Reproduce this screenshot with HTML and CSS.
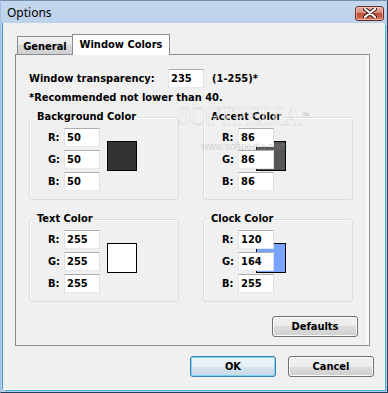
FILE: index.html
```html
<!DOCTYPE html>
<html>
<head>
<meta charset="utf-8">
<title>Options</title>
<link rel="stylesheet" href="styles.css">
</head>
<body>
<div class="window">
  <div class="titlebar">
    <span class="title">Options</span>
    <div class="close">
      <svg width="14" height="10" viewBox="0 0 14 10">
        <path d="M2 1 L12 9 M12 1 L2 9" stroke="#3a1a1a" stroke-width="4" stroke-linecap="round"/>
        <path d="M2 1 L12 9 M12 1 L2 9" stroke="#ffffff" stroke-width="2.2" stroke-linecap="round"/>
      </svg>
    </div>
  </div>
  <div class="client">
    <div class="tabs">
      <div class="tab">General</div>
      <div class="tab active">Window Colors</div>
    </div>
    <div class="panel">
      <div class="trans-row">
        <span class="trans-label">Window transparency:</span>
        <span class="input">235</span>
        <span class="range">(1-255)*</span>
      </div>
      <div class="note">*Recommended not lower than 40.</div>
      <div class="groups">
        <fieldset class="group">
          <legend>Background Color</legend>
          <div class="gbody">
            <div class="rows">
              <span class="lbl">R:</span><span class="input">50</span>
              <span class="lbl">G:</span><span class="input">50</span>
              <span class="lbl">B:</span><span class="input">50</span>
            </div>
            <div class="swatch" style="background:#323232"></div>
          </div>
        </fieldset>
        <fieldset class="group">
          <legend>Accent Color</legend>
          <div class="gbody">
            <div class="rows">
              <span class="lbl">R:</span><span class="input">86</span>
              <span class="lbl">G:</span><span class="input">86</span>
              <span class="lbl">B:</span><span class="input">86</span>
            </div>
            <div class="swatch under" style="background:#565656"></div>
          </div>
        </fieldset>
        <fieldset class="group">
          <legend>Text Color</legend>
          <div class="gbody">
            <div class="rows">
              <span class="lbl">R:</span><span class="input">255</span>
              <span class="lbl">G:</span><span class="input">255</span>
              <span class="lbl">B:</span><span class="input">255</span>
            </div>
            <div class="swatch" style="background:#ffffff"></div>
          </div>
        </fieldset>
        <fieldset class="group">
          <legend>Clock Color</legend>
          <div class="gbody">
            <div class="rows">
              <span class="lbl">R:</span><span class="input">120</span>
              <span class="lbl">G:</span><span class="input">164</span>
              <span class="lbl">B:</span><span class="input">255</span>
            </div>
            <div class="swatch under" style="background:#78a4ff"></div>
          </div>
        </fieldset>
      </div>
      <div class="panel-foot">
        <button class="btn">Defaults</button>
      </div>
    </div>
    <div class="footer">
      <button class="btn ok">OK</button>
      <button class="btn">Cancel</button>
    </div>
  </div>
  <div class="watermark">
    <span class="wm-big">SOFTPEDIA<sup>™</sup></span>
    <span class="wm-small">www.softpedia.com</span>
  </div>
</div>
</body>
</html>
```

FILE: styles.css
```css
* { box-sizing: border-box; }
html, body { margin: 0; padding: 0; }
body {
  width: 388px;
  height: 393px;
  overflow: hidden;
  background: #f0f0f0;
  font-family: "DejaVu Sans Condensed", "DejaVu Sans", sans-serif;
  font-size: 11px;
  font-weight: bold;
  color: #000;
}
.window {
  position: relative;
  width: 388px;
  height: 393px;
  display: flex;
  flex-direction: column;
  background: linear-gradient(#c4d7ed, #b9d0ea 30px, #b9d0ea);
  border-right: 1px solid #1f3d5c;
  border-bottom: 1px solid #1f3d5c;
  border-top: 1px solid #6f8fb3;
  border-left: 1px solid #9fc2e4;
}
.titlebar {
  height: 22px;
  flex: none;
  display: flex;
  align-items: center;
  justify-content: space-between;
  padding: 0 3px 0 6px;
}
.title {
  font-family: "Noto Sans", "Open Sans", sans-serif;
  font-weight: normal;
  font-size: 12px;
  color: #000;
  margin-top: 1px;
}
.close {
  width: 29px;
  height: 15px;
  margin-top: 2px;
  border: 1px solid #6a2f2a;
  border-radius: 3px;
  background: linear-gradient(#e8b0a4, #d48a78 45%, #c0503c 50%, #c75a44 75%, #dc8a6e);
  box-shadow: inset 0 0 0 1px rgba(255,220,210,0.5);
  display: flex;
  align-items: center;
  justify-content: center;
}
.client {
  flex: 1;
  margin: 0 3px 3px 2px;
  background: #f0f0f0;
  box-shadow: 1px 1px 0 #ffffff, -1px 0 0 #3f95d2, 2px 2px 0 #3fa9e0;
  display: flex;
  flex-direction: column;
}
.tabs {
  display: flex;
  align-items: flex-end;
  height: 21px;
  margin: 11px 0 -1px 14px;
  position: relative;
  z-index: 1;
}
.tab {
  width: 55px;
  height: 19px;
  border: 1px solid #898c95;
  border-right: none;
  background: linear-gradient(#f4f4f4, #e6e6e6 50%, #dadada 50%, #d0d0d0);
  display: flex;
  align-items: center;
  justify-content: center;
  padding-top: 1px;
}
.tab.active {
  width: 98px;
  height: 21px;
  border-right: 1px solid #898c95;
  border-bottom: none;
  background: #ffffff;
  padding-top: 0;
  padding-bottom: 1px;
}
.panel {
  width: 355px;
  height: 292px;
  margin-left: 12px;
  border: 1px solid #898c95;
  background: #f0f0f0;
  box-shadow: inset -3px 0 0 #fafafa;
  padding: 14px 11px 8px 13px;
  display: flex;
  flex-direction: column;
}
.trans-row {
  display: flex;
  align-items: center;
  height: 19px;
}
.trans-label { width: 139px; }
.range { margin-left: 8px; }
.input {
  width: 36px;
  height: 19px;
  background: #fff;
  border: 1px solid;
  border-color: #abadb3 #dbdfe6 #e3e9ef #e2e3ea;
  padding-left: 2px;
  display: flex;
  align-items: center;
  position: relative;
  z-index: 1;
}
.note {
  margin-top: 3px;
  line-height: 13px;
}
.groups {
  margin-top: 6px;
  display: grid;
  grid-template-columns: 150px 150px;
  column-gap: 24px;
  row-gap: 12px;
}
.group {
  margin: 0;
  padding: 0;
  min-width: 0;
  border: 1px solid #d5dfe5;
  border-radius: 3px;
  box-shadow: inset 1px 1px 0 #fdfdfd;
}
.group legend {
  margin-left: 5px;
  padding: 0 2px;
  line-height: 14px;
}
.gbody {
  display: flex;
  align-items: flex-start;
  padding: 4px 0 8px 18px;
}
.rows {
  display: grid;
  grid-template-columns: 16px 36px;
  grid-auto-rows: 19px;
  row-gap: 3px;
  align-items: center;
}
.swatch {
  width: 30px;
  height: 30px;
  border: 1px solid #000;
  margin-top: 13px;
  margin-left: 7px;
  flex: none;
}
.swatch.under { margin-left: -18px; }
.panel-foot {
  margin-top: auto;
  display: flex;
  justify-content: flex-end;
}
.btn {
  font: inherit;
  color: #000;
  height: 21px;
  width: 86px;
  border: 1px solid #707070;
  border-radius: 3px;
  background: linear-gradient(#f2f2f2, #ebebeb 50%, #dddddd 50%, #cfcfcf);
  box-shadow: inset 0 0 0 1px #fbfbfb;
  padding: 0;
}
.footer {
  margin-top: 10px;
  display: flex;
  justify-content: flex-end;
  gap: 12px;
  padding-right: 10px;
}
.btn.ok {
  border-color: #3c7fb1;
  box-shadow: inset 0 0 0 1px #7fd3f7;
  background: linear-gradient(#eef5fa, #e4eef6 50%, #d5e3ee 50%, #c9dae8);
}
.watermark {
  position: absolute;
  left: 176px;
  top: 101px;
  pointer-events: none;
  display: flex;
  flex-direction: column;
  align-items: flex-start;
  z-index: 5;
}
.wm-big {
  font-family: "Liberation Serif", serif;
  font-weight: normal;
  font-size: 27px;
  line-height: 28px;
  letter-spacing: -1px;
  color: rgba(255,255,255,0.55);
  -webkit-text-stroke: 0.6px rgba(150,150,150,0.35);
  transform: scaleX(0.9);
  transform-origin: left top;
}
.wm-big sup {
  font-size: 8px;
  vertical-align: top;
  margin-left: 3px;
}
.wm-small {
  margin-left: 24px;
  margin-top: 12px;
  font-family: "Liberation Sans", sans-serif;
  font-weight: normal;
  font-size: 10px;
  line-height: 10px;
  color: rgba(150,150,150,0.35);
}
```
